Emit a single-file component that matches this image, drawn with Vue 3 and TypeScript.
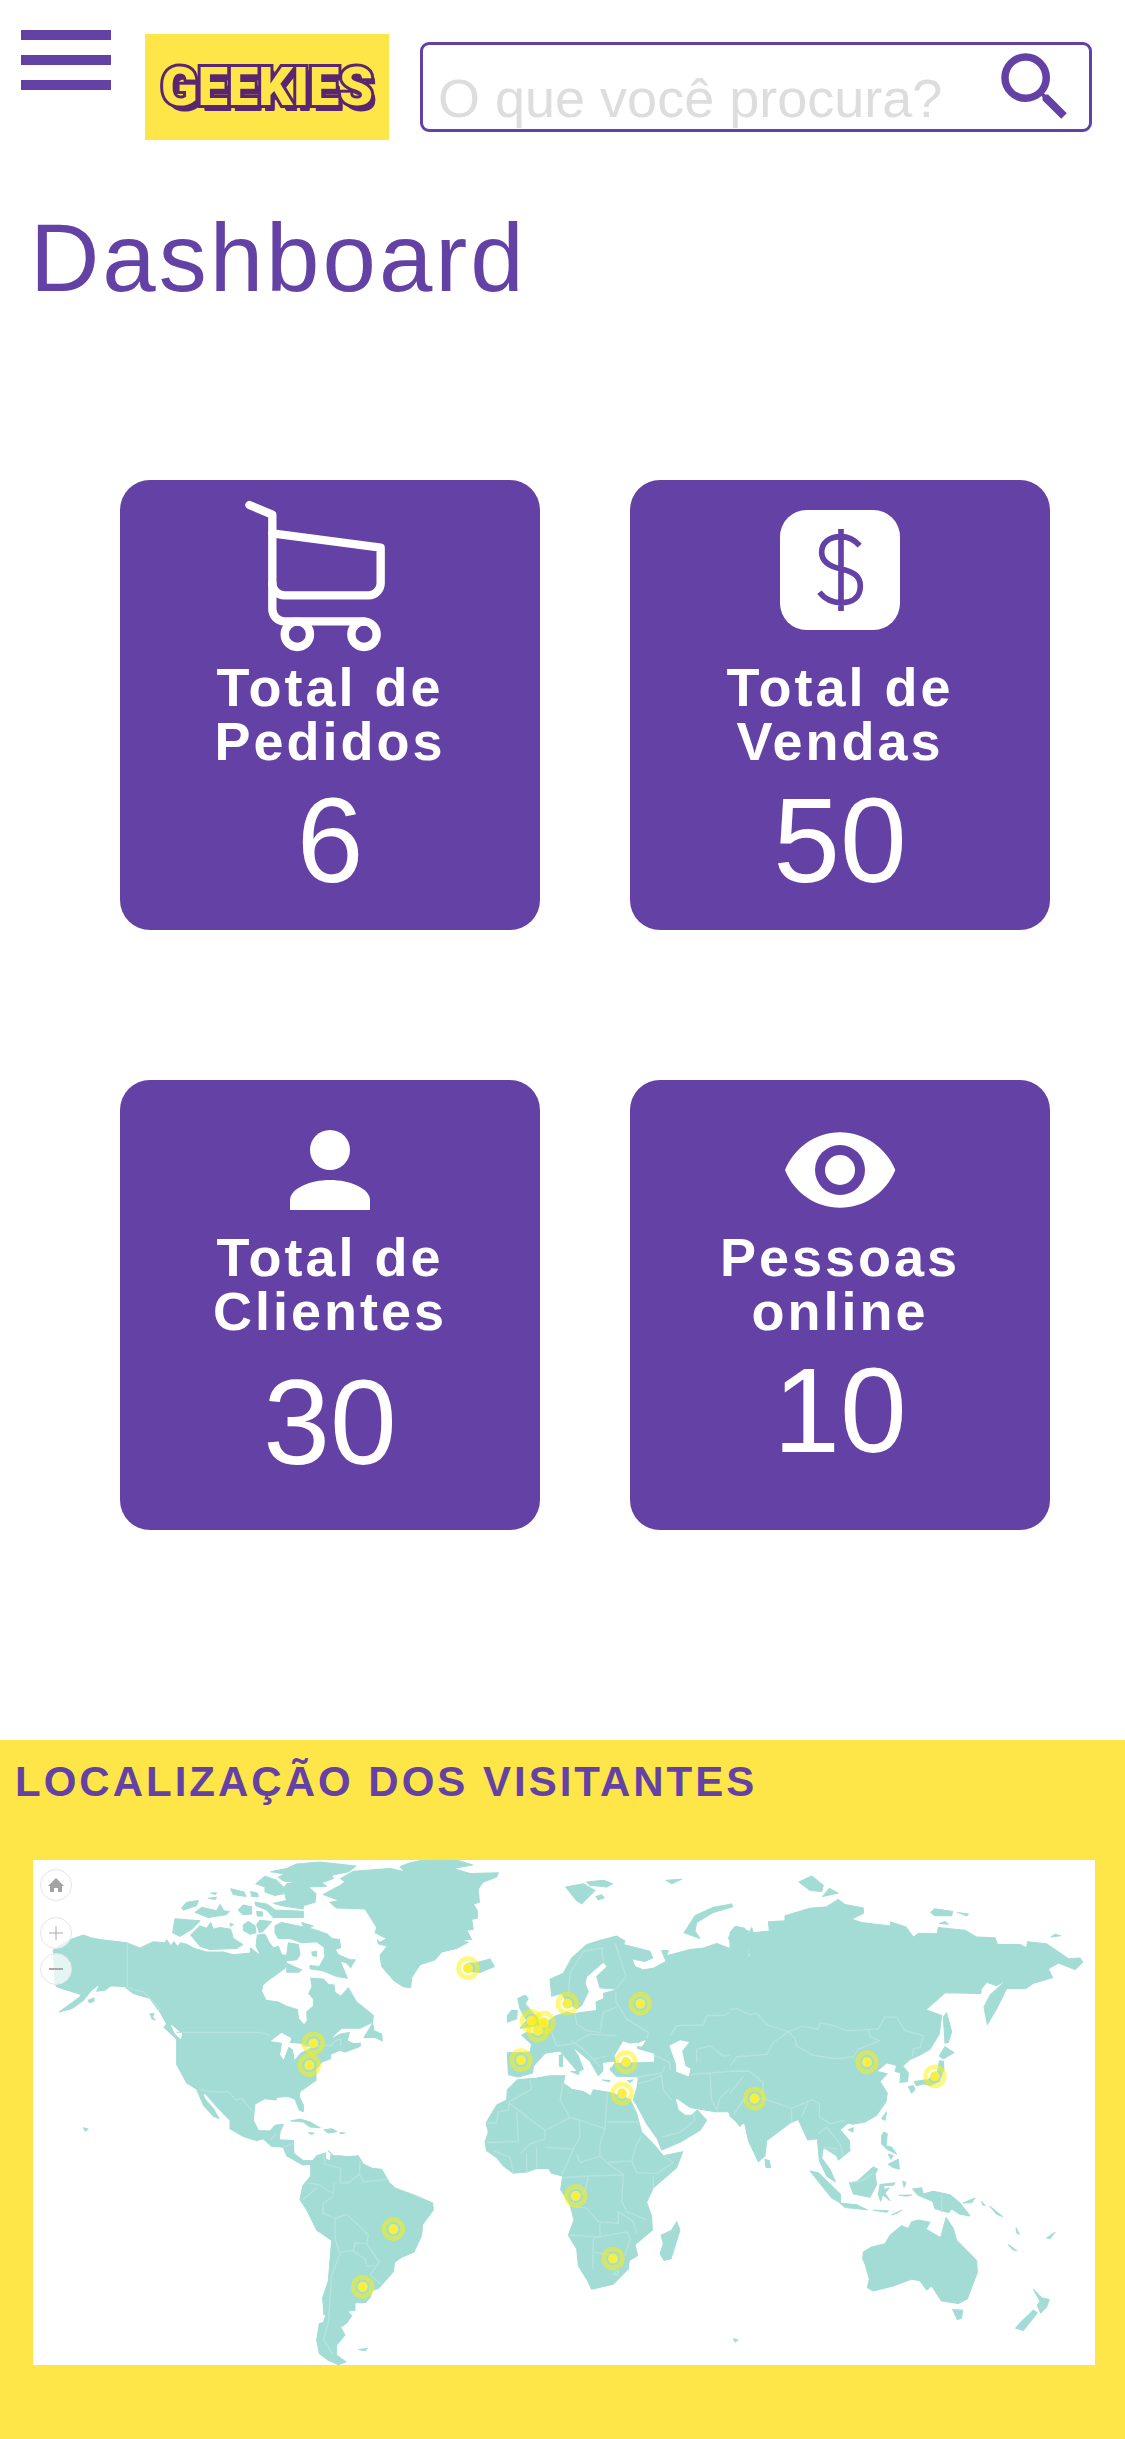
<script setup lang="ts">
import { ref } from 'vue'

type IconName = 'cart' | 'dollar' | 'person' | 'eye'

interface Stat {
  icon: IconName
  label: string
  value: number
  tall: boolean
  roomy: boolean
}

interface Pin {
  x: number
  y: number
}

const query = ref('')

const stats: Stat[] = [
  { icon: 'cart', label: 'Total de Pedidos', value: 6, tall: true, roomy: false },
  { icon: 'dollar', label: 'Total de Vendas', value: 50, tall: true, roomy: false },
  { icon: 'person', label: 'Total de Clientes', value: 30, tall: false, roomy: true },
  { icon: 'eye', label: 'Pessoas online', value: 10, tall: false, roomy: false },
]

const pins: Pin[] = [
  { x: 880, y: 572 },
  { x: 868, y: 637 },
  { x: 1028, y: 1293 },
  { x: 1120, y: 1122 },
  { x: 1344, y: 350 },
  { x: 1642, y: 455 },
  { x: 1861, y: 455 },
  { x: 1534, y: 506 },
  { x: 1572, y: 511 },
  { x: 1554, y: 535 },
  { x: 1503, y: 622 },
  { x: 1818, y: 628 },
  { x: 1806, y: 721 },
  { x: 1667, y: 1024 },
  { x: 1779, y: 1209 },
  { x: 2541, y: 628 },
  { x: 2745, y: 670 },
  { x: 2204, y: 736 },
]
</script>

<template>
  <div class="page">
    <header class="topbar">
      <button class="menu" type="button" aria-label="Menu">
        <span></span>
        <span></span>
        <span></span>
      </button>
      <a class="logo" href="#">GEEKIES</a>
      <form class="search" role="search" @submit.prevent>
        <input v-model="query" type="text" placeholder="O que você procura?" aria-label="O que você procura?" />
        <button type="submit" aria-label="Buscar">
          <svg viewBox="0 0 24 24" aria-hidden="true">
            <path d="M15.5 14h-.79l-.28-.27A6.47 6.47 0 0 0 16 9.500 6.500 6.500 0 1 0 9.500 16c1.610 0 3.090-.59 4.230-1.570l.27.28v.79l5 4.990L20.490 19l-4.990-5zm-6 0C7.010 14 5 11.990 5 9.500S7.010 5 9.500 5 14 7.010 14 9.500 11.990 14 9.500 14z" />
          </svg>
        </button>
      </form>
    </header>

    <main>
      <h1>Dashboard</h1>

      <section class="stats">
        <article v-for="stat in stats" :key="stat.label" class="card" :class="{ roomy: stat.roomy }">
          <svg class="icon" :viewBox="stat.tall ? '390 30 540 540' : '390 30 540 450'" aria-hidden="true">
            <g v-if="stat.icon === 'cart'" fill="none" stroke="#fff" stroke-width="25" stroke-linecap="round" stroke-linejoin="round">
              <path d="M418 105 487 134V418A36 36 0 0 0 523 454H762" />
              <path d="M487 190 812 233V340A36 36 0 0 1 776 376H523A36 36 0 0 1 487 340" />
              <circle cx="562" cy="493" r="38" />
              <circle cx="762" cy="493" r="38" />
            </g>
            <g v-else-if="stat.icon === 'dollar'">
              <rect x="480" y="120" width="360" height="360" rx="80" fill="#fff" />
              <path d="M719 227C704 210 687 200 663 200C625 200 605 220 605 247C605 280 635 291 663 297C700 305 721 318 721 348C721 380 700 398 663 398C635 398 615 388 598 367M663 177V423" fill="none" stroke="#6441a5" stroke-width="17" />
            </g>
            <g v-else-if="stat.icon === 'person'" fill="#fff">
              <circle cx="660" cy="240" r="60" />
              <path d="M540 420V390C540 356 600 330 660 330S780 356 780 390V420Z" />
            </g>
            <g v-else>
              <path d="M495 300C523 232 588 187 660 187S797 232 826 300C797 370 732 413 660 413S523 370 495 300Z" fill="#fff" />
              <circle cx="660" cy="300" r="75" fill="#6441a5" />
              <circle cx="660" cy="300" r="45" fill="#fff" />
            </g>
          </svg>
          <h2>{{ stat.label }}</h2>
          <p>{{ stat.value }}</p>
        </article>
      </section>

      <section class="visitors">
        <h2>LOCALIZAÇÃO DOS VISITANTES</h2>
        <div class="map">
          <svg class="world" viewBox="39 30 3186 1494" preserveAspectRatio="none" role="img" aria-label="Mapa dos visitantes">
            <!-- Americas -->
            <g class="land">
              <path d="M100 295 150 266 190 252 212 260 240 265 320 275 360 290 400 272 435 275 440 266 452 284 462 272 472 286 482 275 500 279 520 290 560 302 610 302 640 310 690 305 692 290 710 305 722 312 708 285 712 252 735 250 748 275 760 290 775 285 785 310 800 312 805 275 835 280 840 310 830 325 800 328 795 350 765 372 745 385 728 400 725 418 738 445 775 450 800 463 832 472 836 500 852 518 862 505 860 480 880 462 880 440 866 425 876 405 872 380 910 382 925 398 942 400 945 422 962 433 985 408 1010 450 1060 490 1058 510 1020 528 965 528 945 545 930 562 960 545 988 540 982 565 1000 573 1022 572 1020 582 975 598 960 593 932 605 932 618 905 628 888 650 888 682 840 715 838 730 850 755 850 775 838 770 825 738 805 730 770 732 768 740 735 736 705 752 700 800 715 830 750 832 765 815 790 812 780 835 778 858 820 860 822 898 848 918 878 920 890 905 920 895 925 890 940 905 960 905 985 908 1015 905 1030 930 1060 943 1085 945 1108 985 1125 1000 1180 1020 1238 1045 1240 1065 1208 1108 1205 1140 1182 1190 1145 1205 1124 1220 1120 1248 1075 1298 1058 1303 1050 1325 1035 1340 1005 1340 1005 1362 982 1365 995 1378 980 1400 962 1412 975 1435 950 1465 950 1495 978 1515 955 1523 925 1510 898 1490 890 1450 898 1400 912 1380 908 1325 925 1275 935 1155 890 1125 860 1065 840 1035 848 995 872 965 872 930 848 932 800 905 790 880 755 877 730 855 710 860 670 848 630 825 630 800 590 760 560 725 548 718 555 738 580 765 597 795 580 788 550 755 530 708 500 690 470 635 470 560 432 525 440 515 420 480 390 440 340 425 315 405 272 402 255 415 230 418 240 396 215 415 190 445 155 470 117 480 180 435 183 428 140 415 110 405 105 395Z" />
              <path d="M458 245 465 204 540 210 515 235 480 256ZM485 172 500 155 535 150 530 165 490 178ZM525 185 545 170 590 180 600 162 612 180 628 182 618 192 565 200ZM512 252 540 225 560 232 572 215 580 235 600 230 632 235 640 262 668 280 650 292 570 295 540 285ZM632 115 672 125 678 138 640 132ZM655 178 670 163 695 168 695 190 670 192ZM670 222 685 212 705 225 708 245 690 250 670 238ZM692 123 712 128 715 138 695 138ZM708 100 735 78 770 90 795 115 790 130 765 135 735 125 735 110ZM752 65 800 55 830 42 900 36 1008 48 985 65 935 75 940 85 905 97 920 108 865 110 888 130 885 155 850 165 850 175 785 165 760 158 800 150 790 115 800 100 830 95 790 92 775 80 795 72ZM705 155 740 160 765 178 850 182 850 200 760 200 740 178 708 165ZM710 222 720 208 755 212 730 240 718 245ZM765 225 785 215 835 225 880 235 920 248 935 262 958 265 962 290 945 295 955 310 990 325 1006 325 992 348 980 335 960 328 982 380 950 375 908 358 870 352 870 342 898 345 915 315 912 288 890 272 845 275 810 262 775 262 765 245ZM800 335 845 355 835 362 800 362ZM845 215 880 225 870 230 850 225ZM1032 555 1058 513 1062 535 1085 545 1087 565 1065 555ZM812 802 840 796 870 805 900 822 870 820 850 805ZM912 828 935 825 950 834 925 838ZM866 837 882 838 875 842ZM960 836 975 838 962 840ZM205 445 222 438 222 448 208 452ZM190 822 204 826 196 832ZM1016 1478 1042 1475 1035 1482ZM390 485 402 484 398 495 406 504 396 500ZM630 218 640 220 632 226ZM875 302 890 300 890 315 878 313ZM565 143 590 140 585 147ZM572 128 590 127 585 132ZM710 182 728 184 728 196 712 196Z" />
              <path d="M910 132 960 105 975 95 962 85 1000 63 1110 55 1155 65 1140 50 1170 38 1210 30 1310 30 1358 45 1300 55 1350 70 1435 68 1430 80 1390 95 1375 115 1378 155 1360 160 1372 180 1372 202 1355 205 1360 235 1340 238 1355 265 1320 268 1345 273 1310 292 1265 302 1245 325 1200 340 1175 378 1172 408 1150 405 1120 385 1085 345 1080 312 1102 285 1075 278 1072 262 1100 263 1065 245 1070 230 1050 198 1035 175 950 172 930 155 958 150Z" />
              <path class="water" d="M755 565 785 543 812 558 808 572 840 575 870 585 840 600 825 618 820 590 805 580 790 618 782 605 788 570ZM1070 258 1095 262 1080 270Z" />
              <path class="water" d="M455 520 485 545 482 558 465 542ZM898 1398 900 1378 914 1378 908 1395ZM920 890 930 900 928 916 920 912Z" />
            </g>
            <g class="border">
              <path d="M322 278V405L345 415 370 420 400 450 420 475M470 540H720L750 548M845 580H905L935 578 945 565 962 560V580M535 708 570 716 625 716 648 740 665 735 695 770M750 858 770 840M790 880 820 868M910 900 915 930 962 942 960 985 985 985 1018 960 1020 920M1018 958 1030 982 1105 975M862 985 895 990 940 1018 942 985M848 1035 890 1000M940 1025 910 1045 908 1075 945 1090 980 1078 1020 1115 1045 1140 1040 1165 1005 1162 1000 1188 1035 1210 1040 1232 1075 1230M945 1090 945 1150 960 1195 935 1260 925 1400 910 1450 940 1495M960 1190 1000 1185M1040 1165 1078 1220 1050 1258 1085 1285" />
            </g>

            <!-- Europe, Africa and western Asia -->
            <g transform="translate(1050 0)">
              <g class="land">
                <path d="M295 335 315 335 360 323 373 345 330 363 300 360ZM587 110 640 100 675 120 635 160 620 150ZM650 95 700 90 728 100 710 110 660 105ZM678 138 695 133 703 142 685 148ZM888 90 935 87 905 100ZM942 245 975 195 1030 170 1085 160 1088 168 1030 185 980 215 975 240 990 262ZM443 440 465 430 475 440 465 455 482 475 505 500 510 520 450 528 470 505 450 470ZM412 490 425 475 442 475 440 500 412 510ZM568 608 577 605 578 642 568 640ZM603 656 628 655 625 665ZM697 681 720 682 718 686ZM772 683 790 680 780 688ZM873 1140 905 1125 920 1100 930 1125 903 1210 882 1215 870 1195 880 1165ZM1090 1446 1104 1450 1095 1456Z" />
                <path d="M1135 785 1110 818 1075 775 1035 775 960 762 925 738 915 732 925 770 945 785 965 785 982 770 1010 800 990 830 930 865 875 888 862 855 830 810 800 755 790 740 802 700 805 672 740 670 720 650 730 625 700 630 698 655 685 668 660 625 605 580 625 610 640 650 622 655 570 595 525 602 490 640 488 660 445 672 415 665 412 600 480 598 485 575 455 548 470 540 500 545 520 515 560 490 590 480 610 485 655 478 680 475 678 450 702 440 700 425 745 412 710 410 690 408 680 375 712 345 700 332 650 375 645 395 655 420 635 460 620 470 590 450 575 425 545 433 540 383 580 365 605 320 650 280 700 265 740 255 765 270 760 280 840 300 848 320 825 330 785 322 795 345 820 355 850 350 888 330 875 298 895 298 890 313 960 295 1000 290 1040 277 1095 298 1075 260 1100 227 1135 240Z" />
                <path d="M443 680 500 675 540 668 585 668 580 690 605 708 640 715 662 728 670 710 720 718 780 738 800 780 815 835 850 870 880 905 938 893 920 940 850 1000 830 1042 845 1085 847 1125 795 1168 803 1200 778 1215 775 1240 730 1285 665 1300 650 1270 625 1230 620 1180 595 1140 612 1095 600 1050 572 1005 578 965 545 957 535 942 500 943 470 953 430 957 400 935 380 910 350 890 345 865 355 835 348 808 380 755 410 740 412 710Z" />
                <path class="water" d="M760 568 780 575 800 572 800 590 852 605 850 625 740 628 735 610ZM795 577 825 565 815 580ZM900 580 930 565 955 570 935 595 945 640 960 648 955 668 920 655 920 635ZM700 632 732 628 725 640 705 650Z" />
              </g>
              <g class="border">
                <path d="M595 430 600 365 640 300 700 290M700 330 695 290M735 275 750 320 768 375 740 408M738 420 738 450 770 500 835 540 830 560M615 485 620 515 650 535 690 540 700 480M700 480 740 465M545 540 560 580 605 575 660 545 740 550M605 565 640 590 670 620 710 610M670 620 690 640M850 605 900 630 900 650M900 550 920 520 1000 518 1010 490 1060 490 1110 470M980 630 980 590 1020 580 1060 610 1110 605M960 665 1020 660 1085 655 1110 650M1020 660 1025 740 1040 770M1040 770 1050 735 1085 700 1110 690M805 690 835 685 875 668 880 710 905 740M875 850 930 835 975 800 970 780M805 672 875 660 885 640M480 680 485 708 418 745 415 770 385 775 380 808 350 808M418 750 525 830 600 792 630 800 705 825 712 720M580 690 570 740 600 792M440 775 445 862 385 865 350 865M525 830 525 855 480 870 450 900M525 880 610 885 630 850 628 800M610 885 590 930 575 960M705 825 690 870 690 905 630 925 620 900M712 805H805M800 870 785 920 710 925 690 905M815 845 800 870M880 905 910 925 860 958 800 955 785 920M710 925 760 960 755 1040 770 1070 830 1095M650 965 760 962M578 970 655 965 645 1010 610 1040M850 1000 850 965M610 1055 650 1060 685 1100 745 1105 745 1070M598 1140 690 1145 770 1130 780 1150 765 1200M690 1100 690 1145 670 1150 668 1240M670 1190 730 1200M430 957 420 910 370 890M470 950 470 900M500 940 500 880M745 1070 790 1100 800 1135M728 1255 745 1245 745 1258Z" />
              </g>
            </g>

            <!-- Central and eastern Asia, Oceania -->
            <g transform="translate(2130 0)">
              <g class="land">
                <path d="M0 245 15 227 45 232 40 260 50 295 35 328 60 315 55 275 55 250 65 230 70 245 118 240 115 213 165 210 165 195 240 173 290 168 325 147 345 162 400 172 400 188 365 205 395 215 480 225 482 213 528 228 550 258 565 247 622 248 625 230 705 238 740 258 795 260 802 280 870 280 890 290 892 272 950 278 1015 322 1050 320 1058 332 1035 354 985 335 955 352 968 378 910 395 888 410 830 410 800 470 772 517 762 465 780 430 835 380 800 402 770 392 753 412 753 425 645 423 587 473 635 490 628 545 600 590 570 607 540 620 518 640 535 660 533 685 510 688 512 660 495 655 500 638 470 630 440 655 472 662 450 685 472 720 468 745 440 785 405 805 368 812 355 808 330 828 358 860 360 890 325 918 320 905 280 880 275 912 300 945 316 982 290 965 268 920 262 855 233 858 205 798 180 808 110 860 105 905 85 923 55 860 45 812 15 800 0 788Z" />
                <path d="M207 95 245 77 280 105 275 123 240 120ZM278 138 298 114 325 128ZM602 185 615 174 668 182 665 195 615 195ZM682 185 715 190 710 195ZM628 218 645 212 655 220ZM962 258 975 250 992 254ZM640 495 650 482 665 538 655 570 645 572ZM628 610 645 582 672 600 640 618ZM628 625 640 625 642 650 628 685 600 698 582 692 605 670 622 660ZM535 700 550 698 555 708 545 720ZM552 685 590 680 590 690 560 698ZM455 795 470 775 465 800ZM355 828 370 822 368 835ZM105 915 118 920 122 940 108 940ZM455 845 462 835 472 840 468 875 485 880 500 900 470 885 455 870ZM475 930 505 915 508 945 490 940ZM475 900 490 905 482 915ZM358 985 380 982 430 938 443 945 435 960 440 990 420 1028 370 1018ZM240 950 265 955 332 1020 332 1045 305 1030ZM330 1045 380 1050 412 1065 345 1058ZM450 990 495 985 490 992 462 993 462 1005 478 1000 465 1015 480 1038 458 1020 452 1040 445 1020ZM518 980 528 985 522 998ZM430 1066 475 1068 470 1072ZM485 1080 515 1066 500 1075ZM507 1022 545 1021 530 1025ZM548 1003 575 1000 580 1018 610 1010 660 1020 690 1045 720 1083 690 1078 665 1062 655 1073 615 1062 608 1040 565 1022ZM700 1045 735 1030 725 1044ZM755 1040 765 1052 758 1050ZM780 1055 818 1085 800 1078ZM858 1118 868 1138 860 1132ZM835 1168 860 1186 848 1182ZM950 1148 975 1132 960 1150Z" />
                <path d="M400 1190 425 1175 465 1165 480 1140 515 1112 535 1120 545 1100 565 1095 600 1102 588 1122 632 1147 648 1088 670 1120 680 1155 740 1215 742 1250 712 1328 685 1342 635 1335 605 1290 590 1302 570 1275 545 1270 490 1290 430 1305 412 1295 418 1270 405 1225 398 1210ZM668 1360 698 1362 695 1385 682 1390ZM910 1300 935 1325 958 1330 950 1352 932 1370 922 1348 930 1335ZM857 1415 870 1400 910 1362 922 1370 880 1422Z" />
              </g>
              <g class="border">
                <path d="M0 472 20 470 60 488 80 482 110 518 175 538 130 570 110 605 20 612 0 640M175 538 215 522 265 530 270 512 310 520 350 535 410 532 445 530 465 495 500 495 525 535 580 550 570 585 550 588 548 610M415 532 420 552 448 565 385 590 370 612 320 618 250 608 200 580 195 558 175 538M0 655 60 655 100 690 98 735 185 765 245 740 268 750 268 790 300 810 345 800M0 720 40 670M185 770 185 805M215 790 235 745M265 840 290 820 330 870 340 905M280 880 325 885M10 785 40 740M635 1020V1072M360 985 395 980 430 955" />
              </g>
            </g>

            <g v-for="(pin, index) in pins" :key="index" class="pin">
              <circle class="ring" :cx="pin.x" :cy="pin.y" r="28" />
              <circle class="dot" :cx="pin.x" :cy="pin.y" r="15" />
            </g>
          </svg>
          <div class="controls">
            <button class="home" type="button" aria-label="Visão inicial">
              <svg viewBox="0 0 32 32" aria-hidden="true"><path d="M16 9 8 17H10V23H14V19H18V23H22V17H24Z" fill="#a3a3a3" /></svg>
            </button>
            <button type="button" aria-label="Aproximar">
              <svg viewBox="0 0 32 32" aria-hidden="true"><path d="M9 16H23M16 9V23" stroke="#a9a9a9" stroke-width="1" /></svg>
            </button>
            <button type="button" aria-label="Afastar">
              <svg viewBox="0 0 32 32" aria-hidden="true"><path d="M9 16H23" stroke="#aaa" stroke-width="2" /></svg>
            </button>
          </div>
        </div>
      </section>
    </main>
  </div>
</template>

<style>
body {
  margin: 0;
  background: #fff;
}
</style>

<style scoped>
.page {
  font-family: "Liberation Sans", Arial, sans-serif;
  color: #6441a5;
}

h1,
h2,
p {
  margin: 0;
}

button {
  padding: 0;
  border: 0;
  background: none;
  cursor: pointer;
}

.topbar {
  display: flex;
  align-items: flex-start;
  padding: 30px 33px 0 21px;
}

.menu {
  display: flex;
  flex-direction: column;
  gap: 15px;
  width: 90px;
  flex: none;
}

.menu span {
  height: 10px;
  background: #6441a5;
}

.logo {
  display: flex;
  align-items: center;
  justify-content: center;
  flex: none;
  width: 244px;
  height: 106px;
  margin: 4px 31px 0 34px;
  background: #fee548;
  color: #fee548;
  font-family: Roboto, "Liberation Sans", sans-serif;
  font-size: 54px;
  font-weight: 900;
  line-height: 64px;
  text-decoration: none;
  -webkit-text-stroke: 6px #5a2671;
  paint-order: stroke fill;
  text-shadow: 1px 1px #5a2671, 2px 2px #5a2671, 3px 3px #5a2671, 4px 4px #5a2671, 4px 5px #5a2671, 4px 6px #5a2671;
}

.search {
  display: flex;
  flex: 1;
  min-width: 0;
  height: 90px;
  box-sizing: border-box;
  margin-top: 12px;
  border: 3px solid #6441a5;
  border-radius: 9px;
}

.search input {
  flex: 1;
  min-width: 0;
  box-sizing: border-box;
  padding: 21px 0 0 15px;
  border: 0;
  outline: 0;
  background: none;
  color: #6441a5;
  font: 54px "Liberation Sans", Arial, sans-serif;
}

.search input::placeholder {
  color: #ddd;
  opacity: 1;
}

.search button {
  flex: none;
  width: 90px;
  margin: -3px 9px;
}

.search svg {
  display: block;
  width: 90px;
  height: 90px;
  fill: #6441a5;
}

h1 {
  padding: 70px 30px 0;
  font-size: 96px;
  font-weight: 400;
  line-height: 96px;
  letter-spacing: 3px;
}

.stats {
  display: grid;
  grid-template-columns: 1fr 1fr;
  gap: 150px 90px;
  padding: 174px 75px 210px 120px;
}

.card {
  display: flex;
  flex-direction: column;
  align-items: center;
  min-height: 450px;
  border-radius: 30px;
  background: #6441a5;
  color: #fff;
  text-align: center;
}

.icon {
  display: block;
  width: 180px;
}

.card h2 {
  max-width: 300px;
  font-size: 54px;
  line-height: 54px;
  letter-spacing: 3px;
}

.card p {
  padding-top: 12px;
  font-size: 120px;
  line-height: 120px;
}

.card.roomy p {
  padding-top: 24px;
}

.visitors {
  padding: 18px 30px 74px 33px;
  background: #fee548;
}

.visitors h2 {
  margin-left: -18px;
  font-size: 42px;
  line-height: 48px;
  letter-spacing: 3px;
}

.map {
  position: relative;
  margin-top: 54px;
  background: #fff;
}

.world {
  display: block;
  width: 100%;
  aspect-ratio: 1062 / 505;
}

.land {
  fill: #a3dcd5;
  stroke: #a3dcd5;
  stroke-width: 3;
  stroke-linejoin: round;
}

.land .water {
  fill: #fff;
  stroke: #fff;
}

.border {
  fill: none;
  stroke: #b6e3dd;
  stroke-width: 4;
  stroke-linejoin: round;
}

.ring {
  fill: none;
  stroke: #fff200;
  stroke-width: 14;
  opacity: 0.5;
}

.dot {
  fill: #f8ef45;
}

.controls {
  position: absolute;
  top: 9px;
  left: 7px;
  display: flex;
  flex-direction: column;
  gap: 4px;
}

.controls button {
  box-sizing: border-box;
  width: 32px;
  height: 32px;
  border: 1px solid #e6e6e6;
  border-radius: 50%;
  background: rgba(255, 255, 255, 0.7);
}

.controls .home {
  margin-bottom: 12px;
}

.controls svg {
  display: block;
  width: 32px;
  height: 32px;
  margin: -1px;
}
</style>
